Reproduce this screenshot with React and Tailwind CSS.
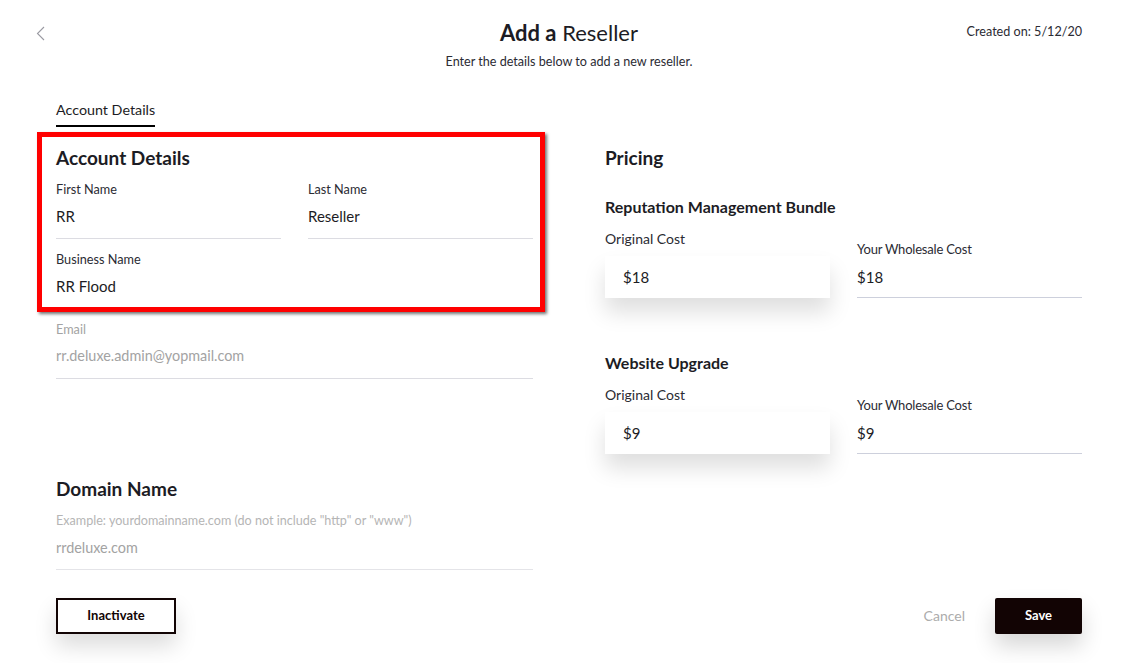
import { useState } from "react";

function Field({ label, value, muted = false }) {
  return (
    <div className="border-b border-[#dcdce2] pb-[12px]">
      <div className={`text-[12.7px] leading-[18px] ${muted ? "text-[#a3a3a3]" : "text-[#2b2b33]"}`}>{label}</div>
      <div className={`mt-[8px] leading-[20px] ${muted ? "text-[14.4px] text-[#a3a3a3]" : "text-[15px] text-[#1c1c24]"}`}>{value}</div>
    </div>
  );
}

function PriceRow({ title, original, wholesale, className = "" }) {
  return (
    <div className={className}>
      <div className="text-[16px] leading-[20px] font-bold text-[#1c1c24]">{title}</div>
      <div className="mt-[12px] grid grid-cols-2 gap-[27px] items-end">
        <div>
          <div className="text-[14px] leading-[20px] text-[#2b2b33]">Original Cost</div>
          <div className="mt-[7px] h-[42px] bg-white flex items-center pl-[18px] text-[15px] text-[#1c1c24] shadow-[0_14px_22px_rgba(0,0,0,0.13)]">
            {original}
          </div>
        </div>
        <div className="border-b border-[#cdd0dc] pb-[10px]">
          <div className="text-[13px] leading-[18px] text-[#2b2b33] tracking-[-0.2px]">Your Wholesale Cost</div>
          <div className="mt-[9px] text-[15px] leading-[20px] text-[#1c1c24]">{wholesale}</div>
        </div>
      </div>
    </div>
  );
}

export default function App() {
  const [tab] = useState("account");

  return (
    <div className="min-h-[663px] bg-white font-['Lato','Noto_Sans',sans-serif] text-[#1c1c24] pl-[56px] pr-[45px]">
      <div className="relative pt-[19px]">
        <button className="absolute left-[-20px] top-[26px] text-[#9a9aa2]">
          <svg width="9" height="15" viewBox="0 0 9 15" fill="none">
            <polyline points="8,1 1.5,7.5 8,14" stroke="currentColor" strokeWidth="1.1" />
          </svg>
        </button>
        <div className="absolute right-0 top-[23px] text-[12.6px] leading-[18px] text-[#2b2b33]">
          Created on: 5/12/20
        </div>
        <h1 className="text-center text-[22px] leading-[28px]">
          <span className="font-bold">Add a</span> Reseller
        </h1>
        <p className="mt-[6px] text-center text-[12.6px] leading-[18px] text-[#2b2b33]">
          Enter the details below to add a new reseller.
        </p>
      </div>

      <div className="mt-[29px] flex">
        <div
          className={`text-[14.3px] leading-[20px] pb-[5px] border-b-2 ${tab === "account" ? "border-black" : "border-transparent"}`}
        >
          Account Details
        </div>
      </div>

      <div className="mt-[19px] grid grid-cols-[477px_477px] gap-[72px]">
        <div className="relative">
          <div className="absolute left-[-19px] top-[-14px] w-[508px] h-[180px] border-[5px] border-[#ff0000] shadow-[2px_2px_3px_rgba(0,0,0,0.55)] pointer-events-none"></div>
          <h2 className="text-[19px] leading-[24px] font-bold">Account Details</h2>
          <div className="mt-[10px] grid grid-cols-2 gap-[27px]">
            <Field label="First Name" value="RR" />
            <Field label="Last Name" value="Reseller" />
          </div>
          <div className="mt-[11px]">
            <Field label="Business Name" value="RR Flood" />
          </div>
          <div className="mt-[11px]">
            <Field label="Email" value="rr.deluxe.admin@yopmail.com" muted />
          </div>

          <h2 className="mt-[98px] text-[19px] leading-[24px] font-bold">Domain Name</h2>
          <div className="mt-[12px] border-b border-[#e4e4e8] pb-[11px]">
            <div className="text-[12.6px] leading-[16px] text-[#b5b5b5]">
              Example: yourdomainname.com (do not include "http" or "www")
            </div>
            <div className="mt-[9px] text-[14.4px] leading-[20px] text-[#a3a3a3]">rrdeluxe.com</div>
          </div>
        </div>

        <div>
          <h2 className="text-[19px] leading-[24px] font-bold">Pricing</h2>
          <PriceRow className="mt-[27px]" title="Reputation Management Bundle" original="$18" wholesale="$18" />
          <PriceRow className="mt-[55px]" title="Website Upgrade" original="$9" wholesale="$9" />
        </div>
      </div>

      <div className="mt-[28px] flex items-center">
        <button className="w-[120px] h-[36px] border-2 border-[#120404] bg-white text-[13px] font-bold text-[#120404] shadow-[0_12px_22px_rgba(0,0,0,0.14)]">
          Inactivate
        </button>
        <div className="ml-auto flex items-center">
          <button className="text-[14px] text-[#acacac] mr-[30px] mt-[-1px]">Cancel</button>
          <button className="w-[87px] h-[36px] rounded-[2px] bg-[#120404] text-white text-[13px] font-bold shadow-[0_12px_22px_rgba(0,0,0,0.16)]">
            Save
          </button>
        </div>
      </div>
    </div>
  );
}
